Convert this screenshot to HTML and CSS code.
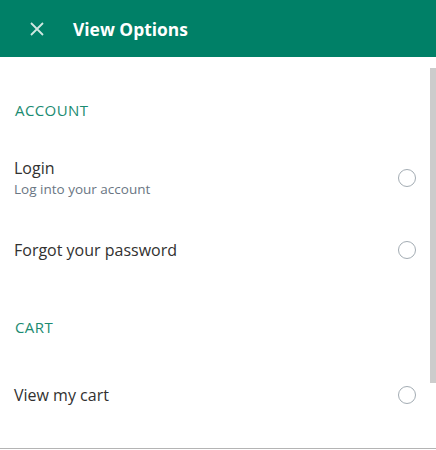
FILE: index.html
```html
<!DOCTYPE html>
<html>
<head>
<meta charset="utf-8">
<link rel="stylesheet" href="styles.css">
</head>
<body>
<div class="panel">
  <header class="topbar">
    <button class="close" aria-label="Close">
      <svg width="14" height="14" viewBox="0 0 14 14"><path d="M1 1 L13 13 M13 1 L1 13" stroke="currentColor" stroke-width="1.8" fill="none"/></svg>
    </button>
    <h1 class="title">View Options</h1>
  </header>
  <main class="content">
    <section class="group">
      <div class="group-title">ACCOUNT</div>
      <div class="item">
        <div class="item-text">
          <div class="item-label">Login</div>
          <div class="item-sub">Log into your account</div>
        </div>
        <span class="radio"></span>
      </div>
      <div class="item">
        <div class="item-text">
          <div class="item-label">Forgot your password</div>
        </div>
        <span class="radio"></span>
      </div>
    </section>
    <section class="group">
      <div class="group-title">CART</div>
      <div class="item">
        <div class="item-text">
          <div class="item-label">View my cart</div>
        </div>
        <span class="radio"></span>
      </div>
    </section>
    <div class="scroll-thumb"></div>
  </main>
</div>
</body>
</html>
```
FILE: styles.css
```css
* { box-sizing: border-box; }
html, body { margin: 0; padding: 0; background: #fff; }
body { font-family: "Open Sans", "Noto Sans", sans-serif; }
.panel {
  width: 436px;
  height: 449px;
  border-bottom: 1px solid #b4b4b4;
  display: flex;
  flex-direction: column;
  overflow: hidden;
}
.topbar {
  height: 57px;
  flex: none;
  background: #008067;
  display: flex;
  align-items: center;
  padding-left: 30px;
}
.close {
  border: 0;
  background: none;
  padding: 0;
  width: 14px;
  height: 14px;
  color: #cfe7e1;
  display: flex;
  margin-right: 29px;
}
.title {
  margin: 0;
  color: #fff;
  font-size: 17.4px;
  font-weight: 700;
  line-height: 24px;
}
.content {
  position: relative;
  flex: 1;
  padding-top: 21px;
}
.group + .group { margin-top: 9px; }
.group-title {
  height: 64px;
  display: flex;
  align-items: center;
  padding-left: 15px;
  color: #1b8b71;
  font-size: 15px;
  letter-spacing: 0.4px;
}
.item {
  height: 72px;
  display: flex;
  align-items: center;
  justify-content: space-between;
  padding: 0 20px 0 14px;
}
.item-label {
  font-size: 16px;
  line-height: 22px;
  color: #323130;
}
.item-sub {
  font-size: 13.5px;
  line-height: 20px;
  color: #6a7683;
}
.radio {
  width: 18px;
  height: 18px;
  border-radius: 50%;
  border: 1.6px solid #a3acb3;
}
.scroll-thumb {
  position: absolute;
  right: 0;
  top: 11px;
  width: 6px;
  height: 315px;
  background: #cccccc;
}
```
